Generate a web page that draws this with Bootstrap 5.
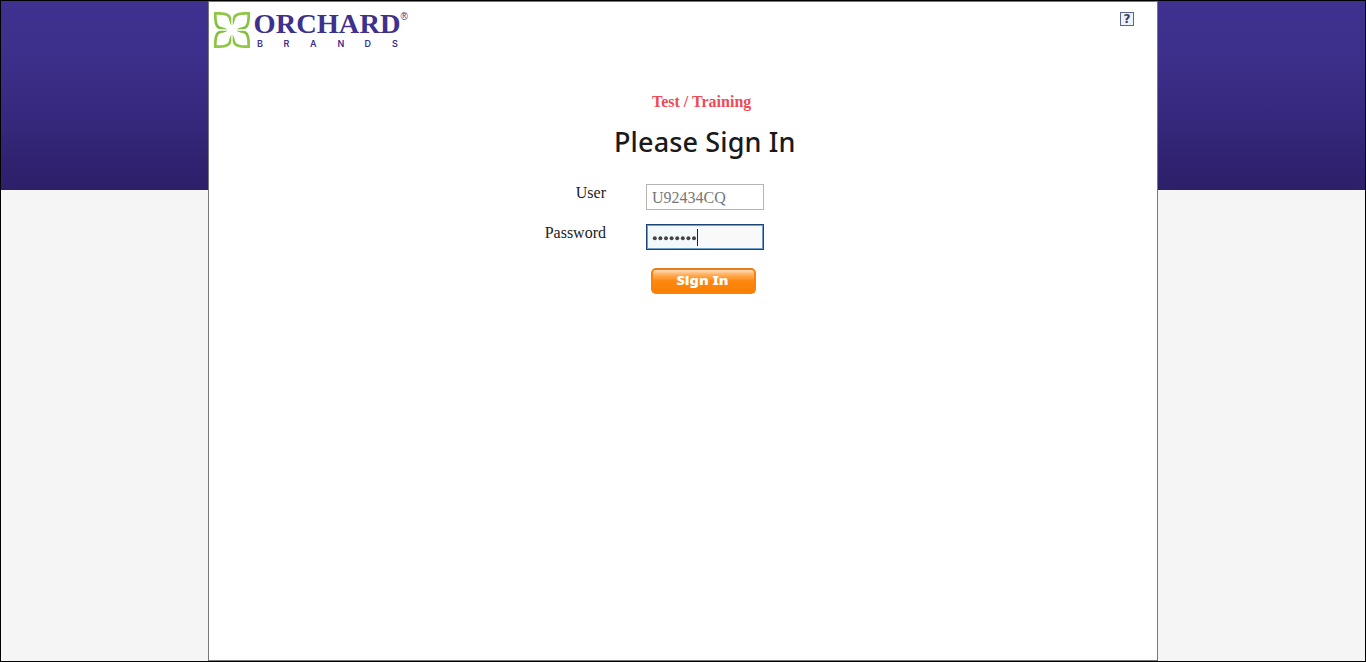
<!DOCTYPE html>
<html lang="en">
<head>
<meta charset="utf-8">
<meta name="viewport" content="width=device-width, initial-scale=1">
<title>Sign In</title>
<link href="https://cdn.jsdelivr.net/npm/bootstrap@5.3.0/dist/css/bootstrap.min.css" rel="stylesheet">
<style>
body{font-family:"Liberation Serif",serif;color:#222;background:#f5f5f5;height:100vh}
.frame{border:1px solid #000;height:100vh;background:linear-gradient(#3e318f 0,#3d308c 50px,#2e1f6a 189px,#f5f5f5 189px)}
.panel{width:950px;margin-left:207px;border:1px solid #777;background:#fff}
.logo{margin:8px 0 0 3px;overflow:visible}
.help{width:14px;height:14px;margin:10px 23px 0 0;border:1px solid #59658f;background:#edf1fa;color:#38405c;font:bold 12px/12px "DejaVu Sans",sans-serif}
.env{color:#ed4b55;font-size:16px;line-height:20px;margin:40px 0 0 443px}
.title{font:500 27px/36px "Noto Sans",sans-serif;letter-spacing:.13px;color:#1a1a1a;margin:12px 0 0 405px}
.login{margin:24px 0 0 297px}
.login label{width:100px;font-size:16px;line-height:18px}
.login .form-control{width:118px;height:26px;margin-left:40px;padding:2px 5px 0;border:1px solid #b5b5b5;border-radius:0;font-size:16px;line-height:22px;color:#777;box-shadow:none}
.login .second{margin-top:14px}
.login .pass{border:1px solid #1d4477;background:linear-gradient(90deg,#f1f9fc,#faf9fa 65%);padding:0 5px;box-shadow:inset 0 0 0 1px #6f9fc8}
.login .btn{width:105px;height:26px;margin:18px 0 0 145px;padding:0;border:2px solid #f38820;border-color:#e77c1f #f88209 #f88209;border-radius:5px;background:linear-gradient(#ffdfbd 0,#ffac57 5px,#fd8710 11px,#fa8002);line-height:1}
</style>
</head>
<body>
<div class="frame">
<main class="panel h-100">
  <header class="d-flex justify-content-between align-items-start">
    <svg class="logo" width="200" height="42" viewBox="0 0 200 42" role="img" aria-label="Orchard Brands">
      <defs>
        <linearGradient id="leaf" x1="0" y1="0" x2="0" y2="1"><stop stop-color="#92c849"/><stop offset="1" stop-color="#80be3c"/></linearGradient>
        <path id="petal" d="M0 0C9-.3 15.500.5 17 5C17.800 8 17 10.500 17.300 13.500C14.500 9 15.800 5.500 12.500 4C9.500 2.700 6 2.700 2.700 2.700C2.700 6 2.700 9.500 4 12.500C5.500 15.800 9 14.500 13.500 17.300C10.500 17 8 17.800 5 17C.5 15.500-.3 9 0 0Z"/>
      </defs>
      <g fill="url(#leaf)" transform="translate(2 2)">
        <use href="#petal"/><use href="#petal" transform="translate(36 0) scale(-1 1)"/>
        <use href="#petal" transform="translate(0 36) scale(1 -1)"/><use href="#petal" transform="translate(36 36) scale(-1 -1)"/>
      </g>
      <g fill="#3d318c">
        <text x="41.500" y="23.300" font-family="Liberation Serif, serif" font-size="28" font-weight="700" textLength="147" lengthAdjust="spacingAndGlyphs">ORCHARD</text>
        <text x="188.500" y="10" font-family="Liberation Sans, sans-serif" font-size="10">®</text>
        <text x="45 71.500 98 125.500 152.500 180" y="36.500" font-family="Inter, sans-serif" font-size="9" font-weight="600">BRANDS</text>
      </g>
    </svg>
    <span class="help d-flex align-items-center justify-content-center">?</span>
  </header>
  <div class="env fw-bold">Test / Training</div>
  <h1 class="title">Please Sign In</h1>
  <form class="login">
    <div class="d-flex">
      <label class="text-end" for="user">User</label>
      <input class="form-control" id="user" value="U92434CQ">
    </div>
    <div class="d-flex second">
      <label class="text-end" for="dots">Password</label>
      <div class="form-control pass d-flex align-items-center" id="dots">
        <svg width="48" height="20" viewBox="0 0 48 20" aria-hidden="true">
          <g fill="#444"><circle cx="2.800" cy="11.300" r="2"/><circle cx="8.400" cy="11.300" r="2"/><circle cx="14" cy="11.300" r="2"/><circle cx="19.600" cy="11.300" r="2"/><circle cx="25.200" cy="11.300" r="2"/><circle cx="30.800" cy="11.300" r="2"/><circle cx="36.400" cy="11.300" r="2"/><circle cx="42" cy="11.300" r="2"/></g>
          <path d="M45.500 2v17" stroke="#222"/>
        </svg>
      </div>
    </div>
    <button class="btn d-block" type="button" aria-label="Sign In">
      <svg class="d-block" width="101" height="22" viewBox="0 0 101 22"><text x="23.500" y="15" fill="#fff" font-family="Noto Sans, sans-serif" font-size="13" font-weight="900" textLength="52" lengthAdjust="spacingAndGlyphs">Sign In</text></svg>
    </button>
  </form>
</main>
</div>
<script src="https://cdn.jsdelivr.net/npm/bootstrap@5.3.0/dist/js/bootstrap.bundle.min.js"></script>
</body>
</html>
